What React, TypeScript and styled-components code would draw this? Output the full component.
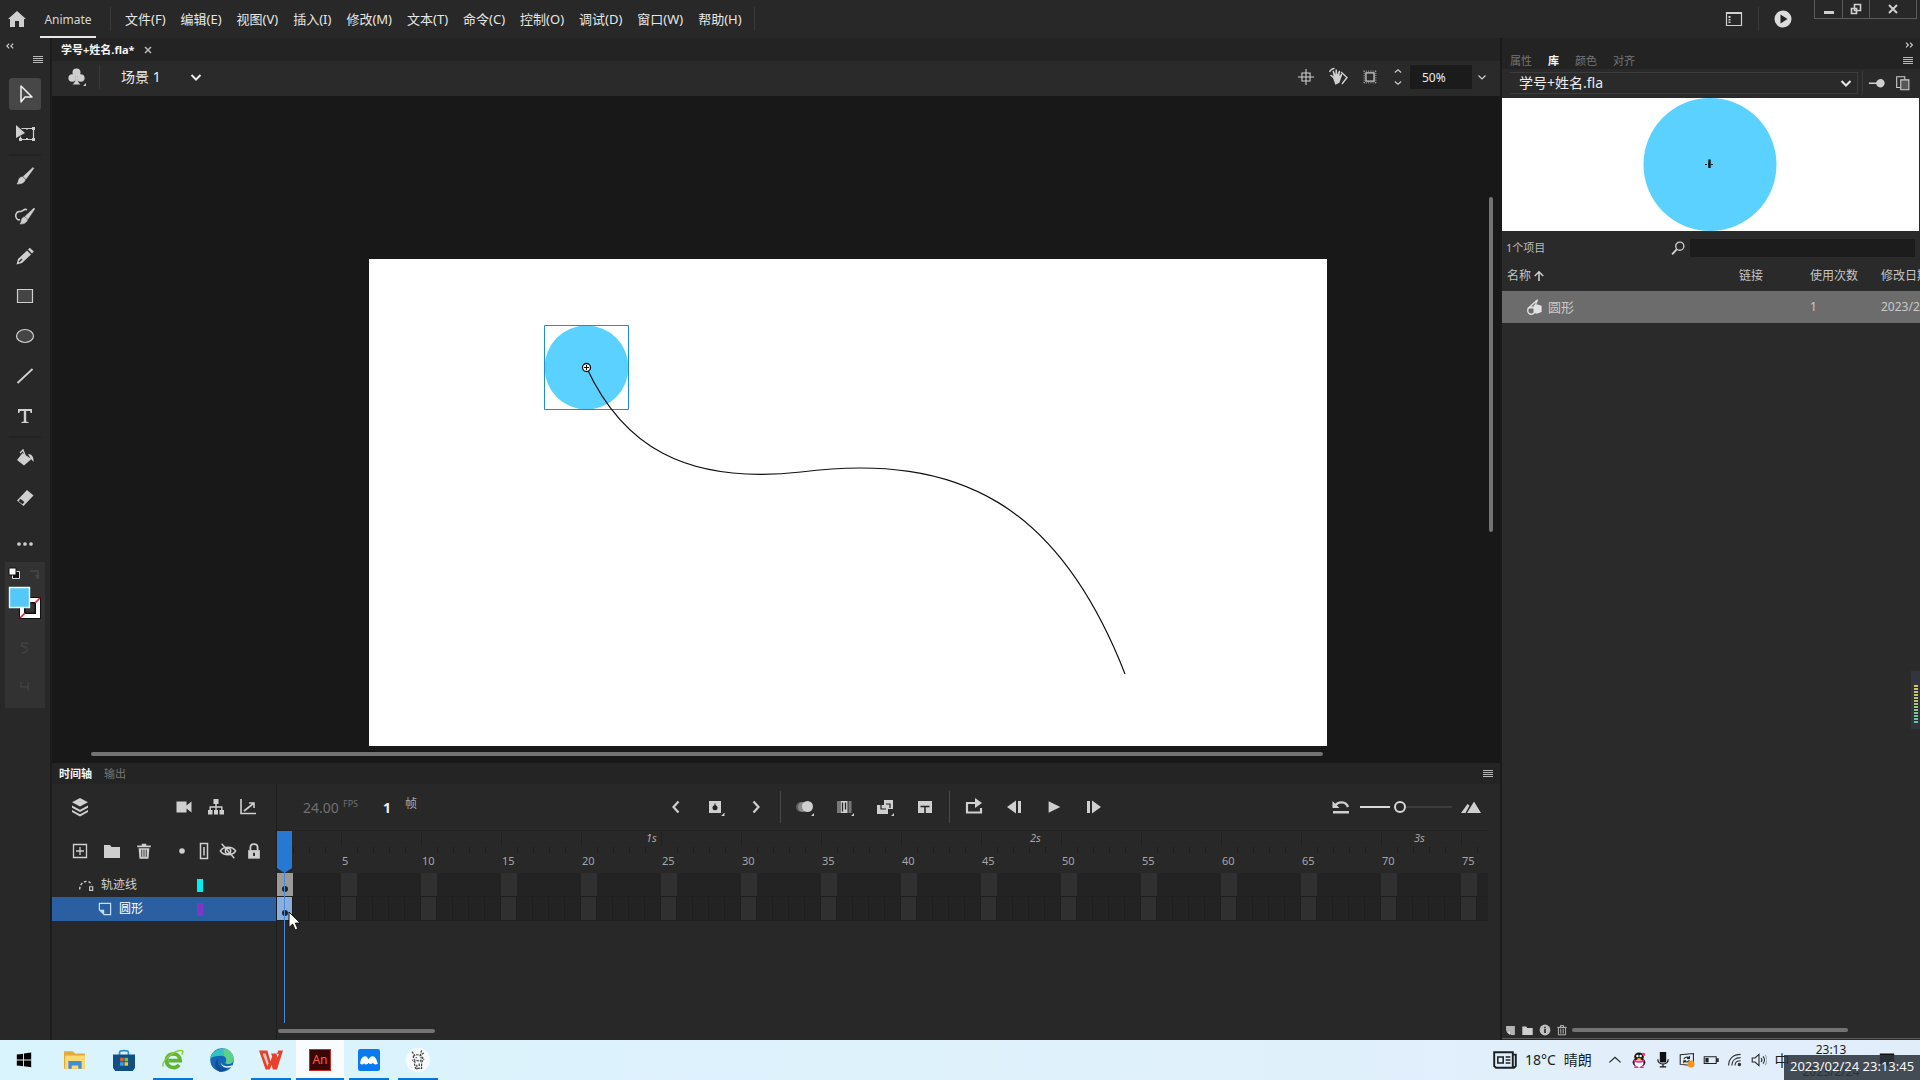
import React from "react";
import styled, { createGlobalStyle, css } from "styled-components";

const FONT = '"Noto Sans", "Noto Sans CJK SC", sans-serif';

const GlobalStyle = createGlobalStyle`
  *, *::before, *::after { box-sizing: border-box; }
  body { margin: 0; background: #282828; color: #d8d8d8; font: 13px/16px ${FONT}; overflow: hidden; }
  button, input, select { font: inherit; color: inherit; margin: 0; padding: 0; border: 0; background: none; }
  button { cursor: pointer; }
`;

/* ---------- shared parts ---------- */

const Svg = styled.svg`
  display: block;
  flex: none;
`;

const Window = styled.div`
  display: flex;
  flex-direction: column;
  height: 100vh;
  overflow: hidden;
`;

const IconButton = styled.button<{ $w?: number; $h?: number; $dim?: boolean }>`
  display: flex;
  align-items: center;
  justify-content: center;
  flex: none;
  width: ${(p) => p.$w ?? 24}px;
  height: ${(p) => p.$h ?? 24}px;
  opacity: ${(p) => (p.$dim ? 0.2 : 1)};
`;

const Divider = styled.span<{ $h?: number; $margin?: string; $color?: string }>`
  flex: none;
  width: 1px;
  height: ${(p) => p.$h ?? 24}px;
  margin: ${(p) => p.$margin ?? "0"};
  background: ${(p) => p.$color ?? "#3a3a3a"};
`;

const Spacer = styled.span`
  flex: 1;
`;

const TabButton = styled.button<{ $on?: boolean }>`
  font-size: 11px;
  line-height: 16px;
  white-space: nowrap;
  color: ${(p) => (p.$on ? "#f4f4f4" : "#757575")};
  font-weight: ${(p) => (p.$on ? 700 : 400)};
`;

/* ---------- icons ---------- */

const C = "#cfcfcf";

const glyphs: Record<string, React.ReactNode> = {
  home: <path d="M10 2 1 10h2v8h5v-6h4v6h5v-8h2z" fill={C} />,
  workspace: (
    <g fill="none" stroke={C} strokeWidth="1.2">
      <path d="M2.500 3.500h15v13h-15zM2.500 4.500h15" />
      <path d="M5.500 7v2M5.500 10v1.500M5.500 12.500v1.500" strokeWidth="2" />
    </g>
  ),
  playCircle: (
    <g>
      <circle cx="10" cy="10" r="8.500" fill="#dcdcdc" />
      <path d="M7.500 5.500v9l7-4.500z" fill="#222" />
    </g>
  ),
  chevronsLeft: <path d="M9 7l-3 3 3 3M14 7l-3 3 3 3" fill="none" stroke={C} strokeWidth="1.400" />,
  chevronsRight: <path d="M5 7l3 3-3 3M10 7l3 3-3 3" fill="none" stroke={C} strokeWidth="1.400" />,
  menu: <path d="M5 6.500h10M5 8.500h10M5 10.500h10M5 12.500h10" stroke="#b8b8b8" strokeWidth="1" />,
  club: (
    <g fill={C}>
      <circle cx="9.500" cy="5.500" r="4" />
      <circle cx="5.200" cy="11" r="3.800" />
      <circle cx="13.800" cy="11" r="3.800" />
      <path d="M9 8h1.200c0 5 .8 8 3.300 9.500h-8C8 16 9 13 9 8zM16 19h3v-3z" />
    </g>
  ),
  chevronDown: <path d="M5.500 8l4.500 4.500L14.500 8" fill="none" stroke="#e8e8e8" strokeWidth="2" />,
  chevronDownThin: <path d="M6.500 8.500l3.500 3.500 3.500-3.500" fill="none" stroke={C} strokeWidth="1.200" />,
  stepper: <path d="M6.500 5l3.500-3 3.500 3M6.500 15l3.500 3 3.500-3" fill="none" stroke={C} strokeWidth="1.200" />,
  center: <path d="M5.500 5.500h9v9h-9zM10 1v18M1 10h18" fill="none" stroke={C} strokeWidth="1.200" />,
  hand: (
    <g>
      <path d="M5 11L2 8.500l1-1 2.500 1.800L4.500 4l1.300-.3 1.500 4L7.500 2.500h1.400l.4 5L11 3.500l1.200.4-.8 5 2-2.500 1 .8-3 8.500-4 2z" fill={C} />
      <path d="M1.500 5c1-2 3-3.500 5-3.500M13 5l6 5.500-5 6.500" fill="none" stroke={C} strokeWidth="1.400" />
    </g>
  ),
  clip: (
    <g fill="none" stroke={C}>
      <path d="M5.500 5.500h9v9h-9z" strokeWidth="1.400" />
      <path d="M3 3.500h14M3 16.500h14M3.500 3v14M16.500 3v14" strokeDasharray="1 1.500" strokeWidth="1" />
    </g>
  ),
  pin: <path d="M1 9.500h8c1-2.500 3-4 5-4 2.500 0 4.500 2 4.500 4.500S16.500 15 14 15c-2 0-4-1.500-5-4H1z" fill={C} />,
  newLib: (
    <g fill="none" stroke={C} strokeWidth="1.200">
      <path d="M7 15H3V3h9v3" />
      <path d="M7.500 6.500h9v11h-9z" fill="#565656" />
    </g>
  ),
  arrow: <path d="M6 2v16l4-5h7z" fill="none" stroke="#f0f0f0" strokeWidth="1.500" strokeLinejoin="round" />,
  transform: (
    <g>
      <path d="M6.500 4.500h12v11H5.500v-3" fill="none" stroke={C} strokeWidth="1.200" />
      <path d="M17 3h3v3h-3zM17 14h3v3h-3zM4 14h3v3H4zM11 14h2v2h-2zM11 4h2v1.500h-2z" fill={C} />
      <path d="M1 1v13l9-5z" fill={C} />
    </g>
  ),
  brush: <path d="M18 1.500l.8.800L11 13 8.200 10.500zM7.500 11l2.800 2.600C9.500 17 6 18 2 18c1.500-1.500 1-3 2-5 .7-1.400 2-2.200 3.500-2z" fill={C} stroke={C} strokeWidth=".6" />,
  artBrush: (
    <g>
      <path d="M19 2l.8.800L13 13l-3-2.500zM9.500 11l3 2.600C11.500 17.500 8 18 5 18c1.500-1.500 1-3 1.700-4.700C7.200 12 8 11 9.500 11z" fill={C} stroke={C} strokeWidth=".6" />
      <path d="M12 4C9 1.500 8 6 5 5.500 1 5-.5 10 2 13c1 1.200 2 1 3 .500" fill="none" stroke={C} strokeWidth="1.500" />
    </g>
  ),
  pencil: (
    <g fill={C}>
      <path d="M12 4.500l4 4L7 17l-5.500 1.500L3 13z" />
      <path d="M13 3.500l1.800-1.800 4 3.800L17 7.500z" />
      <path d="M4 16l3-3" stroke="#333" strokeWidth="1.400" />
    </g>
  ),
  rect: <path d="M2.500 3.500h15v13h-15z" fill="#454545" stroke={C} strokeWidth="1.200" />,
  ellipse: <ellipse cx="10" cy="10" rx="8.500" ry="6.500" fill="#454545" stroke={C} strokeWidth="1.200" />,
  line: <path d="M2.500 17L17.500 3" stroke={C} strokeWidth="1.800" />,
  type: <path d="M3 3h14v4h-1.300L15 5h-3.800v10.500l2.300.500v1h-7v-1l2.300-.500V5H5l-.7 2H3z" fill={C} />,
  bucket: (
    <g>
      <path d="M7.500 5l9 6-7.500 6.500L2 12z" fill={C} />
      <path d="M5 5l3-3 2 5" fill="none" stroke={C} strokeWidth="1.300" />
      <path d="M13 6c4 0 6 3 5.500 8-1-1.500-2-2.500-3-3.500z" fill={C} />
    </g>
  ),
  eraser: (
    <g>
      <path d="M12 2l6.500 5.500L8.500 18 2 12.500z" fill={C} />
      <path d="M4.500 12l4 3.200" stroke="#2a2a2a" strokeWidth="3" />
    </g>
  ),
  dots: (
    <g fill={C}>
      <circle cx="2.500" cy="10" r="2.300" />
      <circle cx="10" cy="10" r="2.300" />
      <circle cx="17.500" cy="10" r="2.300" />
    </g>
  ),
  straighten: <path d="M14 4H6v4c8-1 10 8 0 8" fill="none" stroke="#8a8a8a" strokeWidth="1.500" />,
  corner: <path d="M5 5v6h9V5v11" fill="none" stroke="#8a8a8a" strokeWidth="1.500" />,
  layers: (
    <g fill={C}>
      <path d="M10 1l8 4.200-8 4.300-8-4.300z" />
      <path d="M2 8.500l8 4.200 8-4.200v2.300L10 15l-8-4.200zM2 13l8 4.200 8-4.200v2L10 19.500l-8-4.500z" />
    </g>
  ),
  camera: <path d="M2.500 4.500h10v4l5-4v11l-5-4v4h-10z" fill={C} />,
  hierarchy: (
    <g>
      <path d="M7.500 2h5v5h-5zM2 13h4.500v4.500H2zM8 13h4v4.500H8zM13.500 13H18v4.500h-4.500z" fill={C} />
      <path d="M10 7v6M4.200 13v-3h11.600v3" fill="none" stroke={C} strokeWidth="1.400" />
    </g>
  ),
  graph: <path d="M3 2v14.500h15M6 14l9.500-7.500M11 6h5v5" fill="none" stroke={C} strokeWidth="1.600" />,
  prev: <path d="M12.500 4.500L7.500 10l5 5.500" fill="none" stroke={C} strokeWidth="2.200" />,
  next: <path d="M7.500 4.500l5 5.500-5 5.500" fill="none" stroke={C} strokeWidth="2.200" />,
  keyframe: (
    <g>
      <path d="M3 4h12v12H3zM15 19h3.500v-3.500z" fill={C} />
      <circle cx="9" cy="10.800" r="2.500" fill="#222" />
      <path d="M9 6.500v4" stroke="#222" />
    </g>
  ),
  onion: (
    <g>
      <circle cx="6" cy="10" r="5" fill="#5e5e5e" />
      <circle cx="8" cy="10" r="5" fill="#8a8a8a" />
      <circle cx="12.500" cy="9.500" r="5.500" fill={C} />
      <path d="M16 19h3v-3z" fill={C} />
    </g>
  ),
  multi: (
    <g>
      <path d="M2 4h3v12H2zM13.500 4h3v12h-3z" fill="#777" />
      <path d="M5.500 4h7v12h-7zM16 19h3v-3z" fill={C} />
      <path d="M7.500 5.500v9M10.500 5.500v7" stroke="#222" strokeWidth="1.300" />
    </g>
  ),
  tween: (
    <g>
      <path d="M9 3h9v9h-5v5H2V8h7zM16 19h3v-3z" fill={C} />
      <path d="M6 8v4h5M11 7h4v4" stroke="#222" fill="none" strokeWidth="1.200" />
    </g>
  ),
  insert: (
    <g>
      <path d="M3 4h14v12H3z" fill={C} />
      <path d="M5.500 9.500h9M10 9.500V16" stroke="#222" strokeWidth="1.500" />
    </g>
  ),
  loop: (
    <g>
      <path d="M12 6H3v9.500h14V11" fill="none" stroke={C} strokeWidth="2.200" />
      <path d="M11 1l7 5-7 5z" fill={C} />
    </g>
  ),
  stepBack: <path d="M12 3.500v13L3 10zM14 4h3v12h-3z" fill={C} />,
  play: <path d="M4 3.500v13L17 10z" fill={C} />,
  stepFwd: <path d="M8 3.500v13l9-6.500zM3 4h3v12H3z" fill={C} />,
  undo: (
    <g>
      <path d="M4 9c3-5 11-5 13 1" fill="none" stroke={C} strokeWidth="2.400" />
      <path d="M1.500 4v7h7zM2 14h16v2.400H2z" fill={C} />
    </g>
  ),
  mountains: <path d="M6 16L13 4.500 20 16zM0 16L6.500 7l2 1.500L4.500 16z" fill={C} />,
  addLayer: <path d="M3.500 3.500h13v13h-13zM10 6v8M6 10h8" fill="none" stroke={C} strokeWidth="1.300" />,
  folder: <path d="M2 4h6l1.500 2H18v11H2z" fill={C} />,
  trash: (
    <g fill={C}>
      <path d="M2.500 4h15v1.800h-15zM7.500 2h5v2h-5zM4 7h12l-1 11.500H5z" />
      <path d="M7.500 8.500v8M10 8.500v8M12.500 8.500v8" stroke="#333" strokeWidth="1" />
    </g>
  ),
  dot: <circle cx="10" cy="10" r="2.800" fill={C} />,
  outline: <path d="M6.500 2.500h7v15h-7zM10 6v8.500" fill="none" stroke={C} strokeWidth="1.500" />,
  eyeOff: (
    <g fill="none" stroke={C} strokeWidth="1.600">
      <path d="M1.500 10C5 4.500 15 4.500 18.500 10 15 15.500 5 15.500 1.500 10z" />
      <circle cx="10" cy="10" r="3" />
      <path d="M3 2l14 16" />
    </g>
  ),
  lock: (
    <g>
      <path d="M6 9V6c0-5 8-5 8 0v3" fill="none" stroke={C} strokeWidth="2" />
      <path d="M3.500 9h13v9.500h-13z" fill={C} />
      <path d="M10 12v3.500" stroke="#222" strokeWidth="2" />
    </g>
  ),
  guide: (
    <g fill="none" stroke={C} strokeWidth="1.500">
      <path d="M3 15c0-5 3-9 8-9 3 0 4.500 2 5 4" strokeDasharray="3 2" />
      <path d="M14 12h3.500v4H14z" strokeWidth="1.200" />
    </g>
  ),
  layer: (
    <g>
      <path d="M3 3h14v14H9l-6-6z" fill="none" stroke="#c8dcf4" strokeWidth="1.500" />
      <path d="M3 11h6v6z" fill="#c8dcf4" />
    </g>
  ),
  search: (
    <g fill="none" stroke={C}>
      <circle cx="12" cy="8" r="4.500" strokeWidth="1.500" />
      <path d="M8.500 11.500L3.500 17" strokeWidth="2.200" />
    </g>
  ),
  sortUp: <path d="M10 17V5M4 10l6-6 6 6" fill="none" stroke={C} strokeWidth="2.200" />,
  symbol: (
    <g>
      <path d="M14 2L4 11h6z" fill="none" stroke="#ddd" strokeWidth="1.500" />
      <circle cx="7" cy="14" r="4" fill="none" stroke="#ddd" strokeWidth="1.600" />
      <path d="M9.500 8.500L13 7l5.500 1.500v7L13 17.500l-3.500-1.500z" fill="#e2e2e2" />
    </g>
  ),
  newSymbol: (
    <g>
      <path d="M2 2h16v16h-7L2 10z" fill="#b4b4b4" />
      <path d="M2 12h7v6z" fill="#d8d8d8" />
    </g>
  ),
  info: (
    <g>
      <circle cx="10" cy="10" r="9" fill="#c0c0c0" />
      <path d="M10 8.500V15M10 4.500V7" stroke="#222" strokeWidth="2.600" />
    </g>
  ),
  bin: <path d="M4 6h12v12H4zM2 5.500h16M7.500 5V2.500h5V5M8 8v8M12 8v8" fill="none" stroke="#b8b8b8" strokeWidth="1.600" />,
  /* taskbar */
  start: <path d="M2 4l7-1v6.500H2zM10 2.800L18 1.800v7.700h-8zM2 10.500h7V17l-7-1zM10 10.500h8V18l-8-1z" fill="#000" />,
  explorer: (
    <g>
      <path d="M0 2h8l2 2h9v14H0z" fill="#e6a93a" />
      <path d="M1 6h18v12H1z" fill="#fbd973" />
      <path d="M4 11h12v7h-3v-3H7v3H4z" fill="#3f8fd8" />
    </g>
  ),
  store: (
    <g>
      <path d="M6 6V3c0-2 8-2 8 0v3" fill="none" stroke="#2a8fd6" strokeWidth="1.500" />
      <path d="M0 5h20v12l-2 3H2l-2-3z" fill="#124f86" />
      <path d="M6.500 8H9.700v3.200H6.500z" fill="#ef5a3c" />
      <path d="M10.500 8h3.200v3.200h-3.200z" fill="#7cc142" />
      <path d="M6.500 12h3.200v3.200H6.500z" fill="#35a8ea" />
      <path d="M10.500 12h3.200v3.200h-3.200z" fill="#fcc22d" />
    </g>
  ),
  greenE: (
    <g fill="none">
      <path d="M15.500 14.500c-3 4-11 3-11.500-4C4 3 16 2 16.500 10.500H6" stroke="#62b52f" strokeWidth="3.400" />
      <path d="M1 16C-.5 10 12 .5 18.500 1.500c1 .5.500 2-.5 3.500" stroke="#8fc93f" strokeWidth="1.400" />
    </g>
  ),
  edge: (
    <g>
      <circle cx="10" cy="10" r="9.800" fill="#1766b5" />
      <path d="M.3 9C1-1 17-3 19.700 8.500c.5 4-4 5.500-7 4 2-2.500.5-6-3.500-6C5 6.500 2 7.500.3 9z" fill="#34c1c0" />
      <path d="M11 .2c5 .3 8.500 4.500 8.800 8.800.2 4-5 5.500-7 3.500 2-3 1-5-1-6z" fill="#5fd08a" />
      <path d="M7 9c-2 4 1 9 8 7.500-2 2.500-5 3.500-7 3.200C4 18 3 11 7 9z" fill="#0f4c96" />
      <path d="M9 12c1 3 5 4 9 2.500 1-.3 1 .5.500 1-3 2-9 1-9.500-3.500z" fill="#dff3fc" />
    </g>
  ),
  wps: (
    <g>
      <path d="M0 2h7l2.500 9L11 7l-1-2.500h4.500L15.500 8l1-3H15l1-3h4l-5 16h-3.500L10.500 14 9 18H5.500z" fill="#e8402c" />
      <path d="M3 4.500h2.500L8 13l-1 2.500z" fill="#ffc7bb" />
    </g>
  ),
  meeting: (
    <g>
      <rect width="20" height="20" rx="2" fill="#0a7af0" />
      <path d="M2 13.500c0-4 2-7 4.500-7 1.500 0 2.500 1.500 3 3 .8-1.500 2-3 4-3 2 0 3.500 2.500 4.500 7-2 1-3.500.500-4.500-1-1 1.500-3 1.500-4 0-1 2-3 2-4 .500-.8 1.300-2 1.500-3.500.500z" fill="#fff" />
    </g>
  ),
  avatar: (
    <g>
      <circle cx="10" cy="10" r="10" fill="#f8fbfc" />
      <path d="M5 3l2 3M13 2l-1 4 3-2M6 7c2-2 6-2 8 1l-2 3-5-1zM8 8h1M12 8h1M8 12l-3-2M13 12l2-3M7 13l1 4h5v-4M9 14v4M11 13v3" fill="none" stroke="#444" strokeWidth="1" strokeDasharray="2 .8" />
    </g>
  ),
  news: (
    <g fill="none" stroke="#1b1f24" strokeWidth="1.600">
      <path d="M1 3.500h15.500v13H2.500L1 15zM16.500 5.500H19v9.500l-1.500 1.500H16" />
      <path d="M4 7.500h4.500v5H4zM10.500 7.500h4M10.500 10h4M10.500 12.500h4" strokeWidth="1.300" />
    </g>
  ),
  up: <path d="M3 13l7-6.500 7 6.500" fill="none" stroke="#222" strokeWidth="1.500" />,
  qq: (
    <g>
      <ellipse cx="10" cy="6" rx="6" ry="5.500" fill="#161616" />
      <ellipse cx="10" cy="13" rx="8" ry="6" fill="#2a1c2a" />
      <ellipse cx="10" cy="14" rx="5.500" ry="5" fill="#fff" />
      <circle cx="8" cy="5" r="1.500" fill="#fff" />
      <circle cx="12" cy="5" r="1.500" fill="#fff" />
      <path d="M7 7.500h6L10 9z" fill="#f0a020" />
      <path d="M3.500 9.500c4 2 9 2 13 0v2.500c-4 2-9 2-13 0zM14 1l4 1-1 3-3-1z" fill="#ee2f7b" />
      <path d="M4 18h5v2H4zM11 18h5v2h-5z" fill="#ee2f7b" />
    </g>
  ),
  mic: (
    <g>
      <path d="M6 0h8v13H6z" fill="#111" />
      <path d="M3.500 9c0 8 13 8 13 0M10 15v4M6 18.500h8" fill="none" stroke="#111" strokeWidth="1.500" />
    </g>
  ),
  sync: (
    <g>
      <path d="M1.500 3.500L18 2v15l-16.500-1.500z" fill="none" stroke="#222" strokeWidth="1.300" />
      <path d="M6 9c1-3 5-3.500 7-1M13 5v3h-3M13 10c-1 3-5 3-7 1M6 14v-3h3" fill="none" stroke="#222" strokeWidth="1.300" />
      <circle cx="15" cy="15" r="4.500" fill="#f7941d" />
    </g>
  ),
  battery: (
    <g>
      <path d="M1.500 6h15v8.500h-15zM17.500 8.500h1.500v3.500h-1.500z" fill="none" stroke="#222" strokeWidth="1.300" />
      <path d="M3 7.500h4V13H3z" fill="#222" />
    </g>
  ),
  wifi: (
    <g fill="none" stroke="#333" strokeWidth="1.400">
      <path d="M2 17C2 8 8 3 17 3M6 17c0-6 4-10 11-10M10 17c0-3.500 2-6 7-6" />
      <circle cx="15.500" cy="15.500" r="1.500" fill="#333" />
    </g>
  ),
  speaker: (
    <g fill="none" stroke="#222" strokeWidth="1.300">
      <path d="M1.500 7.500H5L10 3v14l-5-4.500H1.500z" />
      <path d="M12.500 7.500c1.500 1.500 1.500 3.500 0 5M15 5.500c2.500 2.500 2.500 6.500 0 9" />
      <path d="M17.500 3.500c3 4 3 9 0 13" stroke="#9aa" />
    </g>
  ),
  notice: <path d="M1 2h18v13h-7v4l-4-4H1z" fill="#111" />,
};

const Icon = ({ name, size = 20 }: { name: string; size?: number }) => (
  <Svg width={size} height={size} viewBox="0 0 20 20" aria-hidden="true">
    {glyphs[name]}
  </Svg>
);

/* ---------- menu bar ---------- */

const MenuBar = styled.header`
  display: flex;
  align-items: flex-start;
  flex: none;
  height: 38px;
  padding-left: 7px;
  background: #282828;
`;

const MenuMain = styled.nav`
  display: flex;
  align-items: center;
  height: 38px;
`;

const AppTab = styled.button`
  width: 56px;
  height: 37px;
  margin: 0 14px 0 13px;
  padding-top: 4px;
  border-bottom: 2px solid #e8e8e8;
  color: #d6d6d6;
  font-size: 12px;
`;

const MenuItem = styled.button`
  padding: 0 7px 0 8px;
  font-size: 13px;
  line-height: 20px;
  white-space: nowrap;
  color: #e6e6e6;
`;

const MenuTools = styled.div`
  display: flex;
  align-items: center;
  gap: 12px;
  height: 38px;
  margin-right: 19px;
`;

const Caption = styled.div`
  display: flex;
  height: 19px;
  margin-right: 3px;
  border: 1px solid #5a5a5a;
  border-top: 0;
`;

const CaptionButton = styled.button<{ $w: number }>`
  display: flex;
  align-items: center;
  justify-content: center;
  width: ${(p) => p.$w}px;
  & + & { border-left: 1px solid #5a5a5a; }
`;

const menus = ["文件(F)", "编辑(E)", "视图(V)", "插入(I)", "修改(M)", "文本(T)", "命令(C)", "控制(O)", "调试(D)", "窗口(W)", "帮助(H)"];

/* ---------- tool column ---------- */

const Workspace = styled.div`
  display: flex;
  flex: 1;
  min-height: 0;
`;

const ToolColumn = styled.aside`
  display: flex;
  flex-direction: column;
  align-items: center;
  flex: none;
  width: 52px;
  border-right: 2px solid #1c1c1c;
  background: #282828;
`;

const ToolHead = styled.div`
  display: flex;
  justify-content: space-between;
  align-self: stretch;
  height: 40px;
  padding: 0 2px 0 0;
`;

const HeadSlot = styled.button<{ $top?: number }>`
  display: flex;
  align-items: center;
  justify-content: center;
  width: 20px;
  height: 16px;
  margin-top: ${(p) => p.$top ?? 0}px;
`;

const ToolGroup = styled.div`
  display: flex;
  flex-direction: column;
  gap: 8px;
`;

const Tool = styled.button<{ $on?: boolean }>`
  display: flex;
  align-items: center;
  justify-content: center;
  width: 32px;
  height: 32px;
  border-radius: 3px;
  background: ${(p) => (p.$on ? "#474747" : "transparent")};
`;

const ToolRule = styled.hr`
  width: 32px;
  height: 2px;
  margin: 4px 0;
  border: 0;
  background: #222;
`;

const MoreTools = styled(Tool)`
  margin: 14px 0 2px;
`;

const Swatches = styled.div`
  display: flex;
  flex-direction: column;
  align-items: center;
  gap: 14px;
  width: 40px;
  height: 146px;
  padding-top: 4px;
  background: #323232;
`;

const tools1 = ["arrow", "transform"];
const tools2 = ["brush", "artBrush", "pencil", "rect", "ellipse", "line", "type"];
const tools3 = ["bucket", "eraser"];

const Tools = () => (
  <ToolColumn>
    <ToolHead>
      <HeadSlot aria-label="折叠"><Icon name="chevronsLeft" size={16} /></HeadSlot>
      <HeadSlot $top={14} aria-label="面板菜单"><Icon name="menu" /></HeadSlot>
    </ToolHead>
    <ToolGroup>
      {tools1.map((t, i) => <Tool key={t} $on={i === 0} aria-label={t}><Icon name={t} /></Tool>)}
    </ToolGroup>
    <ToolRule />
    <ToolGroup>
      {tools2.map((t) => <Tool key={t} aria-label={t}><Icon name={t} /></Tool>)}
    </ToolGroup>
    <ToolRule />
    <ToolGroup>
      {tools3.map((t) => <Tool key={t} aria-label={t}><Icon name={t} /></Tool>)}
    </ToolGroup>
    <MoreTools aria-label="更多"><Icon name="dots" size={16} /></MoreTools>
    <Swatches>
      <Svg width="40" height="56" viewBox="0 0 40 56" role="img" aria-label="填充和笔触颜色">
        <path d="M7.500 5.500h7v7h-7z" fill="#111" stroke="#ddd" />
        <path d="M4 2h7v7H4z" fill="#fff" stroke="#111" />
        <path d="M25 5h8v8M31 9l2 4" fill="none" stroke="#484848" strokeWidth="1.500" />
        <path d="M14 31h22v22H14z" fill="#111" />
        <path d="M17 34h16v16H17z" fill="none" stroke="#fff" strokeWidth="4" />
        <path d="M20 37h10v10H20z" fill="#333" stroke="#111" />
        <path d="M15 52l5-5M30 37l5-5" stroke="#e2203c" strokeWidth="1.600" />
        <path d="M4.500 21.500h20v20h-20z" fill="#55c8fa" stroke="#f4f4f4" strokeWidth="1.400" />
      </Svg>
      <IconButton $w={32} $dim aria-label="平滑"><Icon name="straighten" size={16} /></IconButton>
      <IconButton $w={32} $dim aria-label="角"><Icon name="corner" size={16} /></IconButton>
    </Swatches>
  </ToolColumn>
);

/* ---------- document area ---------- */

const DocumentColumn = styled.main`
  display: flex;
  flex-direction: column;
  flex: 1;
  min-width: 0;
`;

const DocTabs = styled.div`
  display: flex;
  align-items: center;
  gap: 6px;
  flex: none;
  height: 23px;
  padding-left: 9px;
  background: #232323;
`;

const CloseButton = styled.button`
  display: flex;
  padding: 3px;
`;

const EditBar = styled.div`
  display: flex;
  align-items: center;
  flex: none;
  height: 35px;
  padding: 0 8px 3px 13px;
  background: #2a2a2a;
`;

const SelectShell = styled.label<{ $w?: number }>`
  position: relative;
  display: flex;
  align-items: center;
  width: ${(p) => (p.$w ? `${p.$w}px` : "auto")};
  flex: ${(p) => (p.$w ? "none" : "1")};
  & > svg { position: absolute; right: 1px; pointer-events: none; }
`;

const SelectBox = styled.select`
  width: 100%;
  height: 20px;
  appearance: none;
  outline: 0;
  font-size: 14px;
  line-height: 20px;
  color: #ececec;
`;

const ViewTools = styled.div`
  display: flex;
  align-items: center;
`;

const ZoomInput = styled.input`
  width: 62px;
  height: 24px;
  padding-left: 12px;
  background: #1b1b1b;
  color: #ececec;
  font-size: 12px;
  outline: 0;
`;

const Stage = styled.section`
  display: grid;
  grid-template: minmax(0, 1fr) 17px / minmax(0, 1fr) 16px;
  flex: 1;
  min-height: 0;
  background: #181818;
`;

const Pasteboard = styled.div`
  padding: 163px 0 0 317px;
  overflow: hidden;
`;

const Artboard = styled.div`
  width: 958px;
  height: 540px;
  background: #fff;
`;

const ScrollTrack = styled.div<{ $vertical?: boolean; $pad: string }>`
  display: flex;
  flex-direction: ${(p) => (p.$vertical ? "column" : "row")};
  padding: ${(p) => p.$pad};
`;

const ScrollThumb = styled.div<{ $length: string; $vertical?: boolean }>`
  border-radius: 3px;
  background: #737373;
  ${(p) =>
    p.$vertical
      ? css`width: 4px; height: ${p.$length};`
      : css`height: 4px; width: ${p.$length};`}
`;

/* ---------- timeline ---------- */

const TimelinePanel = styled.section`
  display: flex;
  flex-direction: column;
  flex: none;
  height: 277px;
  background: #282828;
`;

const TimelineTabs = styled.div`
  display: flex;
  align-items: center;
  gap: 12px;
  flex: none;
  height: 21px;
  padding: 0 0 0 7px;
  background: #242424;
`;

const TimelineBody = styled.div`
  display: grid;
  grid-template-columns: 225px minmax(0, 1fr);
  flex: 1;
`;

const LayerPane = styled.div`
  border-right: 1px solid #1e1e1e;
`;

const PaneBar = styled.div<{ $h: number }>`
  display: flex;
  align-items: center;
  gap: 8px;
  height: ${(p) => p.$h}px;
  padding: 0 16px 2px 16px;
`;

const LayerSwitches = styled.div`
  display: flex;
  gap: 2px;
  margin-right: 3px;
`;

const LayerRow = styled.div<{ $on?: boolean; $indent: number }>`
  display: flex;
  align-items: center;
  gap: 6px;
  height: 24px;
  padding: 0 73px 0 ${(p) => p.$indent}px;
  background: ${(p) => (p.$on ? "#2a60a2" : "transparent")};
  color: ${(p) => (p.$on ? "#fff" : "#d0d0d0")};
  font-size: 12px;
`;

const LayerColor = styled.span<{ $color: string }>`
  width: 6px;
  height: 13px;
  background: ${(p) => p.$color};
`;

const FramePane = styled.div`
  position: relative;
  min-width: 0;
`;

const FrameBar = styled.div`
  display: grid;
  grid-template-columns: 1fr auto 1fr;
  align-items: center;
  height: 46px;
  padding: 0 17px 0 10px;
`;

const Counters = styled.div`
  display: flex;
  align-items: center;
  padding-left: 16px;
  color: #6f6f6f;
`;

const CounterField = styled.input<{ $w: number; $strong?: boolean }>`
  width: ${(p) => p.$w}px;
  height: 20px;
  outline: 0;
  font-size: 14px;
  font-weight: ${(p) => (p.$strong ? 700 : 400)};
  color: ${(p) => (p.$strong ? "#f0f0f0" : "#6f6f6f")};
`;

const Unit = styled.span<{ $w: number; $light?: boolean }>`
  width: ${(p) => p.$w}px;
  padding-bottom: 7px;
  font-size: ${(p) => (p.$light ? 12 : 9)}px;
  line-height: 14px;
  color: ${(p) => (p.$light ? "#a8a8a8" : "#6f6f6f")};
`;

const Controls = styled.div`
  display: flex;
  align-items: center;
  gap: 16px;
`;

const ZoomGroup = styled.div`
  display: flex;
  align-items: center;
  justify-content: flex-end;
  gap: 7px;
`;

const Range = styled.input`
  width: 92px;
  height: 16px;
  margin: 0;
  appearance: none;
  background: linear-gradient(90deg, #d8d8d8 0 33%, #282828 33% 50%, #3c3c3c 50%) center / 100% 2px no-repeat;
  &::-webkit-slider-thumb {
    appearance: none;
    width: 12px;
    height: 12px;
    border: 2px solid #d8d8d8;
    border-radius: 50%;
    background: #282828;
  }
`;

const Ruler = styled.div`
  display: flex;
  height: 43px;
  margin-right: 12px;
  overflow: hidden;
  border-top: 1px solid #222;
`;

const RulerCell = styled.div<{ $major?: boolean }>`
  display: flex;
  flex-direction: column;
  flex: none;
  width: 16px;
  white-space: nowrap;
  font-size: 11px;
  color: #a6a6a6;
  border-left: 1px solid transparent;
  border-image: ${(p) =>
    p.$major
      ? "linear-gradient(#202020 0 36%, transparent 36%) 1"
      : "linear-gradient(transparent 0 38%, #1c1c1c 38% 52%, transparent 52%) 1"};
`;

const Second = styled.i`
  width: 14px;
  height: 13px;
  line-height: 13px;
`;

const FrameNumber = styled.span`
  width: 14px;
  height: 14px;
  margin-top: 10px;
  line-height: 14px;
`;

const Frames = styled.div`
  display: flex;
  height: 24px;
  margin-right: 12px;
  overflow: hidden;
  background: #232323;
  border-bottom: 1px solid #1f1f1f;
`;

const Frame = styled.div<{ $kind: "key" | "fifth" | "plain"; $ticks: boolean; $on: boolean }>`
  display: flex;
  align-items: flex-end;
  justify-content: center;
  flex: none;
  width: 16px;
  padding-bottom: 4px;
  border-right: 1px solid ${(p) => (p.$ticks ? "#1e1e1e" : "transparent")};
  background: ${(p) => (p.$kind === "key" ? (p.$on ? "#8aaede" : "#9a9a9a") : p.$kind === "fifth" ? "#303030" : "transparent")};
`;

const KeyDot = styled.span`
  width: 6px;
  height: 6px;
  border-radius: 50%;
  background: #20242c;
`;

const Playhead = styled.div`
  position: absolute;
  left: 0;
  top: 47px;
  width: 15px;
  height: 192px;
  pointer-events: none;
  background: linear-gradient(#4d86d4, #4d86d4) center / 1px 100% no-repeat;
  &::before {
    content: "";
    display: block;
    height: 42px;
    background: #2678d2;
    clip-path: polygon(0 0, 100% 0, 100% 88%, 50% 100%, 0 88%);
  }
`;

const Pointer = styled.div`
  position: absolute;
  left: 11px;
  top: 127px;
`;

const FrameScroll = styled.div`
  padding: 108px 0 0 1px;
`;

const frameList = Array.from({ length: 76 }, (_, i) => i + 1);

const Timeline = () => (
  <TimelinePanel>
    <TimelineTabs>
      <TabButton $on>时间轴</TabButton>
      <TabButton>输出</TabButton>
      <Spacer />
      <IconButton aria-label="面板菜单"><Icon name="menu" /></IconButton>
    </TimelineTabs>
    <TimelineBody>
      <LayerPane>
        <PaneBar $h={47}>
          <IconButton aria-label="图层"><Icon name="layers" /></IconButton>
          <Spacer />
          <IconButton aria-label="摄像头"><Icon name="camera" /></IconButton>
          <IconButton aria-label="父级"><Icon name="hierarchy" /></IconButton>
          <IconButton aria-label="图表"><Icon name="graph" /></IconButton>
        </PaneBar>
        <PaneBar $h={42}>
          <IconButton aria-label="新建图层"><Icon name="addLayer" /></IconButton>
          <IconButton aria-label="新建文件夹"><Icon name="folder" /></IconButton>
          <IconButton aria-label="删除"><Icon name="trash" size={18} /></IconButton>
          <Spacer />
          <LayerSwitches>
            <IconButton $w={20} aria-label="突出显示"><Icon name="dot" /></IconButton>
            <IconButton $w={20} aria-label="轮廓"><Icon name="outline" /></IconButton>
            <IconButton aria-label="隐藏"><Icon name="eyeOff" size={18} /></IconButton>
            <IconButton aria-label="锁定"><Icon name="lock" size={18} /></IconButton>
          </LayerSwitches>
        </PaneBar>
        <LayerRow $indent={25}>
          <Icon name="guide" size={18} />轨迹线<Spacer /><LayerColor $color="#00f0f0" />
        </LayerRow>
        <LayerRow $indent={45} $on>
          <Icon name="layer" size={16} />圆形<Spacer /><LayerColor $color="#7f35c8" />
        </LayerRow>
      </LayerPane>
      <FramePane>
        <FrameBar>
          <Counters>
            <CounterField $w={40} aria-label="帧速率" defaultValue="24.00" />
            <Unit $w={40}>FPS</Unit>
            <CounterField $w={22} $strong aria-label="当前帧" defaultValue="1" />
            <Unit $w={16} $light>帧</Unit>
          </Counters>
          <Controls>
            <IconButton aria-label="后退"><Icon name="prev" /></IconButton>
            <IconButton aria-label="关键帧"><Icon name="keyframe" /></IconButton>
            <IconButton aria-label="前进"><Icon name="next" /></IconButton>
            <Divider $h={32} $margin="0 -4px" $color="#484848" />
            <IconButton aria-label="绘图纸外观"><Icon name="onion" /></IconButton>
            <IconButton aria-label="编辑多个帧"><Icon name="multi" /></IconButton>
            <IconButton aria-label="补间"><Icon name="tween" /></IconButton>
            <IconButton aria-label="插入帧"><Icon name="insert" /></IconButton>
            <Divider $h={32} $margin="0 -4px" $color="#484848" />
            <IconButton aria-label="循环"><Icon name="loop" /></IconButton>
            <IconButton aria-label="后退一帧"><Icon name="stepBack" /></IconButton>
            <IconButton aria-label="播放"><Icon name="play" size={18} /></IconButton>
            <IconButton aria-label="前进一帧"><Icon name="stepFwd" /></IconButton>
          </Controls>
          <ZoomGroup>
            <IconButton aria-label="重置缩放"><Icon name="undo" /></IconButton>
            <Range type="range" min={0} max={100} defaultValue={42} aria-label="时间轴缩放" />
            <IconButton aria-label="放大"><Icon name="mountains" /></IconButton>
          </ZoomGroup>
        </FrameBar>
        <Ruler>
          {frameList.map((f) => (
            <RulerCell key={f} $major={f % 5 === 0}>
              <Second>{f % 24 === 0 ? `${f / 24}s` : ""}</Second>
              <FrameNumber>{f % 5 === 0 ? f : ""}</FrameNumber>
            </RulerCell>
          ))}
        </Ruler>
        {[false, true].map((on) => (
          <Frames key={String(on)}>
            {frameList.map((f) => (
              <Frame key={f} $kind={f === 1 ? "key" : f % 5 === 0 ? "fifth" : "plain"} $ticks={on} $on={on}>
                {f === 1 && <KeyDot />}
              </Frame>
            ))}
          </Frames>
        ))}
        <FrameScroll><ScrollThumb $length="157px" /></FrameScroll>
        <Playhead />
        <Pointer>
          <Svg width="14" height="20" viewBox="0 0 14 20">
            <path d="M1 1v15.500l3.600-3.400 2.600 5.800 2.600-1.200-2.500-5.600h5z" fill="#fff" stroke="#111" />
          </Svg>
        </Pointer>
      </FramePane>
    </TimelineBody>
  </TimelinePanel>
);

/* ---------- library ---------- */

const Library = styled.aside`
  display: flex;
  flex-direction: column;
  flex: none;
  width: 420px;
  border-left: 2px solid #1a1a1a;
  background: #2a2a2a;
`;

const LibraryTop = styled.div`
  display: flex;
  justify-content: flex-end;
  align-items: center;
  height: 14px;
  background: #232323;
`;

const LibraryTabs = styled.div`
  display: flex;
  align-items: center;
  gap: 16px;
  height: 17px;
  padding-left: 8px;
  background: #232323;
`;

const LibraryPicker = styled.div`
  display: flex;
  align-items: center;
  gap: 2px;
  height: 29px;
  padding: 1px 5px 3px 8px;
`;

const PickerFrame = styled.div`
  display: flex;
  flex: 1;
  height: 22px;
  padding-left: 9px;
  border: 1px solid #3c3c3c;
  border-left: 0;
`;

const Preview = styled.div`
  display: flex;
  justify-content: center;
  height: 133px;
  margin-right: 1px;
  padding-right: 2px;
  background: #fff;
`;

const SearchRow = styled.div`
  display: flex;
  align-items: center;
  height: 34px;
  padding: 0 5px 0 4px;
  font-size: 11px;
  color: #bcbcbc;
`;

const SearchLabel = styled.label`
  display: flex;
  align-items: center;
  gap: 3px;
  width: 246px;
`;

const SearchInput = styled.input`
  flex: 1;
  min-width: 0;
  height: 18px;
  background: #1c1c1c;
  outline: 0;
`;

const TableWrap = styled.div`
  flex: 1;
  overflow: hidden;
`;

const LibraryTable = styled.table`
  width: 100%;
  table-layout: fixed;
  border-collapse: collapse;
  white-space: nowrap;
  th, td { padding: 0 0 0 5px; overflow: hidden; text-align: left; font-weight: 400; }
  th { height: 26px; padding-bottom: 4px; font-size: 12px; color: #c4c4c4; }
  td { height: 32px; font-size: 12px; color: #c8c8c8; background: #6c6c6c; }
  td:first-child { font-size: 13px; }
`;

const Cell = styled.div<{ $indent?: number; $gap?: number }>`
  display: flex;
  align-items: center;
  gap: ${(p) => p.$gap ?? 1}px;
  padding-left: ${(p) => p.$indent ?? 0}px;
`;

const Col = styled.col<{ $w?: number }>`
  width: ${(p) => (p.$w ? `${p.$w}px` : "auto")};
`;

const LibraryFoot = styled.div`
  display: flex;
  align-items: center;
  gap: 4px;
  height: 17px;
  padding-left: 2px;
  border-bottom: 1px solid #5c5c5c;
  margin-bottom: 1px;
`;

const LibraryPanel = () => (
  <Library>
    <LibraryTop><HeadSlot aria-label="折叠"><Icon name="chevronsRight" size={16} /></HeadSlot></LibraryTop>
    <LibraryTabs>
      <TabButton>属性</TabButton>
      <TabButton $on>库</TabButton>
      <TabButton>颜色</TabButton>
      <TabButton>对齐</TabButton>
      <Spacer />
      <IconButton $h={16} aria-label="面板菜单"><Icon name="menu" /></IconButton>
    </LibraryTabs>
    <LibraryPicker>
      <PickerFrame>
        <SelectShell>
          <SelectBox aria-label="文档"><option>学号+姓名.fla</option></SelectBox>
          <Icon name="chevronDown" />
        </SelectShell>
      </PickerFrame>
      <Divider $margin="0 0 0 2px" />
      <IconButton aria-label="固定"><Icon name="pin" size={18} /></IconButton>
      <IconButton aria-label="新建库面板"><Icon name="newLib" size={18} /></IconButton>
    </LibraryPicker>
    <Preview>
      <Svg width="134" height="133" viewBox="0 0 134 133" role="img" aria-label="圆形">
        <circle cx="67" cy="66.500" r="66.500" fill="#5ad1ff" />
        <path d="M62 66.500h9" stroke="#111" strokeDasharray="2 1" />
        <path d="M66.500 61.500v8.500" stroke="#111" strokeWidth="2.400" />
      </Svg>
    </Preview>
    <SearchRow>
      <Spacer>1个项目</Spacer>
      <SearchLabel>
        <Icon name="search" size={18} />
        <SearchInput type="text" aria-label="搜索" />
      </SearchLabel>
    </SearchRow>
    <TableWrap>
      <LibraryTable>
        <colgroup><Col $w={232} /><Col $w={71} /><Col $w={71} /><Col /></colgroup>
        <thead>
          <tr><th><Cell>名称<Icon name="sortUp" size={14} /></Cell></th><th>链接</th><th>使用次数</th><th>修改日期</th></tr>
        </thead>
        <tbody>
          <tr><td><Cell $indent={18} $gap={5}><Icon name="symbol" size={18} />圆形</Cell></td><td /><td>1</td><td>2023/2/24</td></tr>
        </tbody>
      </LibraryTable>
    </TableWrap>
    <LibraryFoot>
      <IconButton $w={13} $h={14} aria-label="新建元件"><Icon name="newSymbol" size={11} /></IconButton>
      <IconButton $w={13} $h={14} aria-label="新建文件夹"><Icon name="folder" size={13} /></IconButton>
      <IconButton $w={13} $h={14} aria-label="属性"><Icon name="info" size={12} /></IconButton>
      <IconButton $w={13} $h={14} aria-label="删除"><Icon name="bin" size={12} /></IconButton>
      <ScrollThumb $length="276px" />
    </LibraryFoot>
  </Library>
);

const Meter = styled.div`
  position: absolute;
  right: 0;
  top: 671px;
  width: 9px;
  height: 58px;
  padding: 14px 2px 4px 3px;
  background: #34343e;
  &::before {
    content: "";
    display: block;
    height: 38px;
    background:
      repeating-linear-gradient(transparent 0 2px, #23262c 2px 3px),
      linear-gradient(#e0c060, #b8c860 40%, #60c8a8 90%);
  }
`;

/* ---------- taskbar ---------- */

const Taskbar = styled.footer`
  position: relative;
  display: flex;
  align-items: stretch;
  gap: 1px;
  flex: none;
  height: 40px;
  background: linear-gradient(90deg, #d9f4fd, #dff2fc 50%, #e2edfa);
  color: #1a1d22;
`;

const TaskButton = styled.button<{ $run?: boolean; $on?: boolean; $gap?: number }>`
  display: flex;
  align-items: center;
  justify-content: center;
  width: 48px;
  margin-right: ${(p) => p.$gap ?? 0}px;
  background:
    ${(p) => (p.$run || p.$on ? "linear-gradient(#0878d4, #0878d4)" : "none")} bottom / ${(p) => (p.$on ? 48 : 40)}px 2px no-repeat,
    ${(p) => (p.$on ? "#fafdff" : "transparent")};
`;

const AnLogo = styled.span`
  display: flex;
  align-items: center;
  justify-content: center;
  width: 22px;
  height: 22px;
  border: 1px solid #c62a20;
  background: #3a0606;
  color: #ff5a4a;
  font-size: 12px;
  line-height: 16px;
`;

const Weather = styled.button`
  display: flex;
  align-items: center;
  gap: 8px;
  width: 110px;
  font-size: 14px;
  white-space: nowrap;
`;

const Tray = styled.div`
  display: flex;
  align-items: center;
`;

const Ime = styled.button`
  width: 22px;
  font-size: 15px;
`;

const Clock = styled.time`
  display: flex;
  flex-direction: column;
  align-items: center;
  align-self: stretch;
  gap: 6px;
  width: 76px;
  padding-top: 2px;
  font-size: 12px;
  line-height: 16px;
`;

const Corner = styled.div`
  display: flex;
  align-items: center;
  width: 51px;
  padding-left: 6px;
`;

const Stamp = styled.div`
  position: absolute;
  right: 0;
  bottom: 0;
  width: 136px;
  height: 25px;
  padding-left: 6px;
  background: rgba(44, 52, 62, 0.88);
  color: #f6f6f6;
  font-size: 13px;
  line-height: 23px;
  white-space: nowrap;
`;

const trayIcons = ["up", "qq", "mic", "sync", "battery", "wifi", "speaker"];

export default function App() {
  return (
    <Window>
      <GlobalStyle />
      <MenuBar>
        <MenuMain>
          <IconButton $w={20} aria-label="主页"><Icon name="home" /></IconButton>
          <AppTab>Animate</AppTab>
          <Divider $margin="0 6px 0 0" />
          {menus.map((m) => <MenuItem key={m}>{m}</MenuItem>)}
          <Divider $margin="0 0 0 5px" />
        </MenuMain>
        <Spacer />
        <MenuTools>
          <IconButton aria-label="工作区"><Icon name="workspace" /></IconButton>
          <Divider />
          <IconButton aria-label="测试影片"><Icon name="playCircle" /></IconButton>
        </MenuTools>
        <Caption>
          <CaptionButton $w={27} aria-label="最小化">
            <Svg width="12" height="12"><path d="M1 8h10v3H1z" fill={C} /></Svg>
          </CaptionButton>
          <CaptionButton $w={27} aria-label="还原">
            <Svg width="12" height="12"><path d="M4.500 1.500h6v6h-6zM1.500 5.500h5v5h-5z" fill="none" stroke={C} strokeWidth="1.600" /></Svg>
          </CaptionButton>
          <CaptionButton $w={47} aria-label="关闭">
            <Svg width="12" height="12"><path d="M2 2l8 8M10 2l-8 8" stroke={C} strokeWidth="2" /></Svg>
          </CaptionButton>
        </Caption>
      </MenuBar>
      <Workspace>
        <Tools />
        <DocumentColumn>
          <DocTabs>
            <TabButton $on>学号+姓名.fla*</TabButton>
            <CloseButton aria-label="关闭文档">
              <Svg width="8" height="8"><path d="M1 1l6 6M7 1L1 7" stroke="#bbb" strokeWidth="1.500" /></Svg>
            </CloseButton>
          </DocTabs>
          <EditBar>
            <IconButton aria-label="编辑元件"><Icon name="club" /></IconButton>
            <Divider $margin="0 21px 0 10px" />
            <SelectShell $w={86}>
              <SelectBox aria-label="场景"><option>场景 1</option></SelectBox>
              <Icon name="chevronDown" />
            </SelectShell>
            <Spacer />
            <ViewTools>
              <IconButton $w={32} aria-label="居中"><Icon name="center" size={18} /></IconButton>
              <IconButton $w={32} aria-label="旋转"><Icon name="hand" /></IconButton>
              <IconButton $w={32} aria-label="裁切"><Icon name="clip" size={18} /></IconButton>
              <IconButton $w={24} aria-label="步进"><Icon name="stepper" size={18} /></IconButton>
              <ZoomInput aria-label="缩放" defaultValue="50%" />
              <IconButton $w={20} aria-label="缩放列表"><Icon name="chevronDownThin" /></IconButton>
            </ViewTools>
          </EditBar>
          <Stage>
            <Pasteboard>
              <Artboard>
                <Svg width="958" height="540" viewBox="0 0 958 540" role="img" aria-label="舞台">
                  <circle cx="217.500" cy="108.500" r="42" fill="#5ad1ff" />
                  <path d="M175.500 66.500h84v84h-84z" fill="none" stroke="#1f8fd0" />
                  <path d="M217.500 108.500C253 185 314 226 432 213C590 193 690 246 756 415" fill="none" stroke="#111" strokeWidth="1.200" />
                  <circle cx="217.500" cy="108.500" r="4" fill="#fff" stroke="#111" strokeWidth="1.300" />
                  <path d="M215 108.500h5M217.500 106v5" stroke="#111" />
                </Svg>
              </Artboard>
            </Pasteboard>
            <ScrollTrack $vertical $pad="101px 0 0 5px"><ScrollThumb $vertical $length="335px" /></ScrollTrack>
            <ScrollTrack $pad="6px 161px 0 39px"><ScrollThumb $length="100%" /></ScrollTrack>
          </Stage>
          <Timeline />
        </DocumentColumn>
        <LibraryPanel />
      </Workspace>
      <Meter />
      <Taskbar>
        <TaskButton $gap={2} aria-label="开始"><Icon name="start" size={18} /></TaskButton>
        <TaskButton aria-label="资源管理器"><Icon name="explorer" size={22} /></TaskButton>
        <TaskButton aria-label="商店"><Icon name="store" size={22} /></TaskButton>
        <TaskButton $run aria-label="浏览器"><Icon name="greenE" size={22} /></TaskButton>
        <TaskButton aria-label="Edge"><Icon name="edge" size={24} /></TaskButton>
        <TaskButton $run aria-label="WPS"><Icon name="wps" size={24} /></TaskButton>
        <TaskButton $on><AnLogo>An</AnLogo></TaskButton>
        <TaskButton $run aria-label="会议"><Icon name="meeting" size={22} /></TaskButton>
        <TaskButton $run aria-label="助手"><Icon name="avatar" size={24} /></TaskButton>
        <Spacer />
        <Tray>
          <Weather><Icon name="news" size={24} /><span>18°C</span><span>晴朗</span></Weather>
          {trayIcons.map((t) => <IconButton key={t} aria-label={t}><Icon name={t} size={16} /></IconButton>)}
          <Ime>中</Ime>
          <Clock><span>23:13</span><span>2023/2/24</span></Clock>
          <Corner><IconButton aria-label="通知"><Icon name="notice" size={16} /></IconButton></Corner>
        </Tray>
        <Stamp>2023/02/24 23:13:45</Stamp>
      </Taskbar>
    </Window>
  );
}
